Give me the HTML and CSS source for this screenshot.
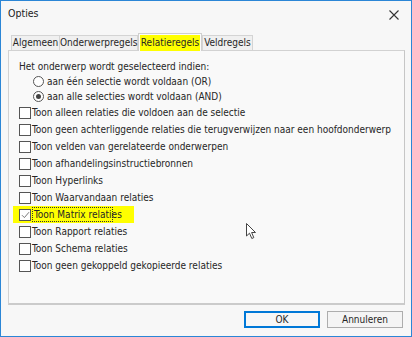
FILE: index.html
```
<!DOCTYPE html>
<html>
<head>
<meta charset="utf-8">
<link rel="stylesheet" href="styles.css">
</head>
<body>
<div class="window">
  <div class="titlebar">
    <span class="title">Opties</span>
    <svg class="close" width="10" height="10" viewBox="0 0 10 10"><path d="M0.5 0.5 L9.5 9.5 M9.5 0.5 L0.5 9.5" stroke="#333" stroke-width="1.1" fill="none"/></svg>
  </div>
  <div class="tabs">
    <div class="tab t1">Algemeen</div>
    <div class="tab t2">Onderwerpregels</div>
    <div class="tab active"><span class="hl">Relatieregels</span></div>
    <div class="tab t4">Veldregels</div>
  </div>
  <div class="panel">
    <div class="row head">Het onderwerp wordt geselecteerd indien:</div>
    <div class="row radio"><span class="rb"></span>aan één selectie wordt voldaan (OR)</div>
    <div class="row radio"><span class="rb on"></span>aan alle selecties wordt voldaan (AND)</div>
    <div class="row cb"><span class="box"></span>Toon alleen relaties die voldoen aan de selectie</div>
    <div class="row cb"><span class="box"></span>Toon geen achterliggende relaties die terugverwijzen naar een hoofdonderwerp</div>
    <div class="row cb"><span class="box"></span>Toon velden van gerelateerde onderwerpen</div>
    <div class="row cb"><span class="box"></span>Toon afhandelingsinstructiebronnen</div>
    <div class="row cb"><span class="box"></span>Toon Hyperlinks</div>
    <div class="row cb"><span class="box"></span>Toon Waarvandaan relaties</div>
    <div class="row cb marked"><span class="box"><svg width="9" height="8" viewBox="0 0 9 8"><path d="M1 4.2 L3.4 6.6 L8 1.2" stroke="#7a7a7a" stroke-width="1" fill="none"/></svg></span><span class="focus">Toon Matrix relaties</span></div>
    <div class="row cb"><span class="box"></span>Toon Rapport relaties</div>
    <div class="row cb"><span class="box"></span>Toon Schema relaties</div>
    <div class="row cb"><span class="box"></span>Toon geen gekoppeld gekopieerde relaties</div>
    <svg class="cursor" width="12" height="17" viewBox="0 0 12 17"><path d="M0.5 0.5 L0.5 13 L3.5 10.2 L5.8 15.5 L7.8 14.6 L5.6 9.5 L9.5 9.5 Z" fill="#fff" stroke="#444" stroke-width="1"/></svg>
  </div>
  <div class="buttons">
    <button class="btn ok">OK</button>
    <button class="btn">Annuleren</button>
  </div>
</div>
</body>
</html>
```
FILE: styles.css
```
* { box-sizing: border-box; }
html, body { margin: 0; padding: 0; background: #ffffff; }
body {
  font-family: "DejaVu Sans Condensed", "DejaVu Sans", sans-serif;
  font-size: 10px;
  color: #262626;
}
.window {
  width: 412px;
  height: 337px;
  border: 1px solid #2b86d6;
  background: #f7f7f7;
  display: flex;
  flex-direction: column;
  overflow: hidden;
}
.titlebar {
  height: 32px;
  display: flex;
  align-items: flex-start;
  justify-content: space-between;
  padding: 6px 12px 0 7px;
}
.title { font-size: 10.5px; color: #222; }
.close { margin-top: 3px; }
.tabs {
  display: flex;
  align-items: flex-end;
  margin-left: 10px;
  height: 17px;
  position: relative;
  z-index: 1;
}
.tab {
  height: 15px;
  border: 1px solid #d4d4d4;
  border-bottom: none;
  background: #f0f0f0;
  text-align: center;
  line-height: 13px;
  margin-right: -1px;
  color: #262626;
}
.t1 { width: 49px; }
.t2 { width: 79px; }
.t4 { width: 51px; margin-left: 1px; }
.tab.active {
  width: 64px;
  height: 18px;
  background: #fbfbfb;
  border-color: #cfcfcf;
  margin-bottom: -1px;
  padding: 1px 1px 0;
  margin-left: 1px;
}
.hl {
  display: block;
  background: #ffff00;
  height: 16px;
  line-height: 15px;
}
.panel {
  margin: 0 6px 0 7px;
  height: 255px;
  border: 1px solid #d2d2d2;
  border-right-color: #c6c6c6;
  border-bottom: 2px solid #cbcbcb;
  background: #f9f9f9;
  padding: 7px 0 0 10px;
  position: relative;
}
.row {
  display: flex;
  align-items: center;
  height: 17px;
  white-space: nowrap;
}
.row.head { height: 16px; }
.row.radio { height: 15px; padding-left: 14px; }
.rb {
  flex-shrink: 0;
  width: 11px;
  height: 11px;
  border: 1px solid #555;
  border-radius: 50%;
  background: #fff;
  margin-right: 3px;
  display: flex;
  align-items: center;
  justify-content: center;
}
.rb.on::after {
  content: "";
  width: 5px;
  height: 5px;
  border-radius: 50%;
  background: #444;
}
.box {
  flex-shrink: 0;
  width: 12px;
  height: 12px;
  border: 1px solid #555;
  background: #fff;
  margin-right: 1px;
  display: flex;
  align-items: center;
  justify-content: center;
}
.row.marked {
  background: #ffff00;
  margin-left: -6px;
  padding-left: 6px;
  width: 121px;
}
.focus {
  border: 1px dotted #333;
  padding: 0 1px;
  line-height: 13px;
  width: 81px;
}
.cursor {
  position: absolute;
  left: 237px;
  top: 172px;
}
.buttons {
  display: flex;
  justify-content: flex-end;
  gap: 7px;
  padding: 6px 8px 0 0;
}
.btn {
  font-family: inherit;
  font-size: 10px;
  width: 76px;
  height: 17px;
  padding: 0;
  background: #f4f4f4;
  border: 1px solid #adadad;
  color: #262626;
  line-height: 14px;
}
.btn.ok {
  border: 2px solid #0078d7;
  background: #f7f7f7;
}
```
